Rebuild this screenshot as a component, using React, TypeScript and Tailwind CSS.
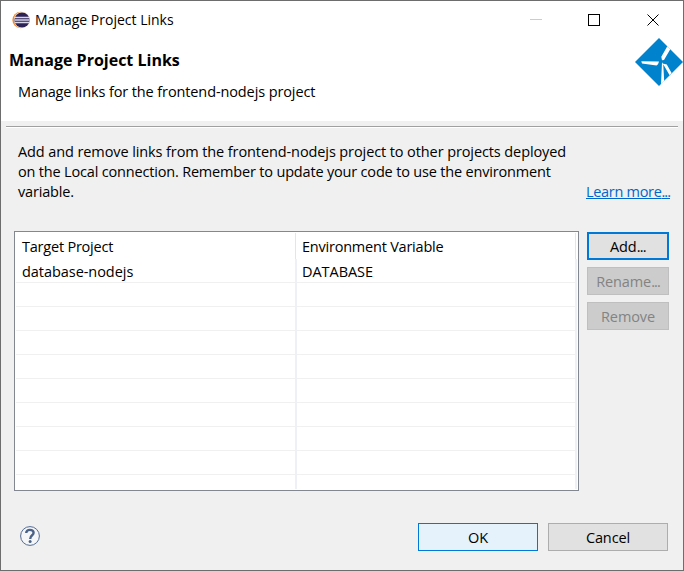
import React from "react";

const rows = [
  { target: "database-nodejs", variable: "DATABASE" },
  ...Array.from({ length: 8 }, () => ({ target: "", variable: "" })),
];

function EclipseIcon() {
  return (
    <svg width="18" height="18" viewBox="0 0 18 18" className="shrink-0">
      <circle cx="8.6" cy="9" r="8.2" fill="#f08a2c" />
      <circle cx="10" cy="9" r="8.2" fill="#fbe6d0" />
      <circle cx="10" cy="9" r="7.6" fill="#2c2255" />
      <path d="M3 6.6h14M2.6 9h15M3 11.4h14" stroke="#d9d5ea" strokeWidth="1.5" />
    </svg>
  );
}

function WindmillLogo() {
  return (
    <svg width="48" height="48" viewBox="0 0 48 48" className="shrink-0">
      <path d="M24 0L48 24L24 48L0 24Z" fill="#0082cc" />
      <path
        d="M32.3 8.3L35.3 11.3L29 22L27 22.3L26.3 18.8ZM6.3 23.2L24 23.6L23 26.2L21.5 27.4L7 25.6ZM27 24.3L28.2 26L29.2 43L26 46.2ZM27.8 25.6L31.8 26.6L36.6 35L34.6 37.2Z"
        fill="#fff"
      />
    </svg>
  );
}

function WindowControls() {
  return (
    <svg width="131" height="14" viewBox="0 0 131 14" fill="none" shapeRendering="crispEdges">
      <path d="M0 6.5h12" stroke="#ccc" />
      <path d="M58.5 1.5h11v11h-11z" stroke="#000" />
      <path d="M117.5 1.5l11 11M128.5 1.5l-11 11" stroke="#000" shapeRendering="auto" />
    </svg>
  );
}

function HelpIcon() {
  return (
    <svg width="20" height="20" viewBox="0 0 20 20" fill="none">
      <circle cx="10" cy="10" r="9.4" fill="#f5f6f8" stroke="#526b92" strokeWidth="1" />
      <path
        d="M6.2 7C6.2 4.8 7.7 3.9 9.9 3.9C12.3 3.9 13.6 5 13.6 6.8C13.6 9.4 10.2 9.2 10.2 12.9"
        stroke="#4b6288"
        strokeWidth="2.4"
      />
      <circle cx="10.1" cy="15.5" r="1.5" fill="#4b6288" />
    </svg>
  );
}

export default function App() {
  return (
    <div className="flex h-[571px] w-[684px] flex-col overflow-hidden border border-[#6d6d6d] bg-[#f0f0f0] font-['Open_Sans','Noto_Sans',sans-serif] text-[14.5px] leading-5 text-black">
      <header className="h-[120px] shrink-0 bg-white">
        <div className="flex h-[37px] items-center pr-[22px] pl-[11px]">
          <EclipseIcon />
          <span className="ml-[5px] flex-1 text-[14px] whitespace-nowrap">Manage Project Links</span>
          <WindowControls />
        </div>
        <div className="flex justify-between">
          <div>
            <h1 className="mt-3 pl-2 text-[16px] leading-5 font-bold">Manage Project Links</h1>
            <p className="mt-3 pl-[17px] tracking-[-0.11px]">Manage links for the frontend-nodejs project</p>
          </div>
          <WindmillLogo />
        </div>
      </header>
      <div className="mx-[5px] mt-[5px] h-[2px] shrink-0 border-t border-[#a0a0a0] bg-white" />

      <div className="mt-[14px] flex h-[60px] shrink-0 items-end justify-between pr-[13px] pl-[17px] whitespace-nowrap">
        <p className="tracking-[-0.18px]">
          <span className="tracking-[-0.1px]">
            Add and remove links from the frontend-nodejs project to other projects deployed
          </span>
          <br />
          on the Local connection. Remember to update your code to use the environment
          <br />
          variable.
        </p>
        <a className="tracking-[-0.3px] text-[#0066cc] underline">
          Learn more<span className="tracking-[-1px]">...</span>
        </a>
      </div>

      <main className="mt-[29px] flex h-[260px] shrink-0 gap-2 pl-[13px]">
        <section className="h-[260px] w-[565px] overflow-hidden border border-[#828790] bg-white px-px pt-px pb-px">
          <div className="flex h-[26px] w-[560px] tracking-[-0.22px]">
            <div className="w-[280px] border-r border-[#e5e5e5] pt-1 pl-1.5">Target Project</div>
            <div className="w-[280px] border-r border-[#e5e5e5] pt-1 pl-1.5">Environment Variable</div>
          </div>
          <div className="h-[230px] w-[561px] overflow-hidden">
            {rows.map((row, i) => (
              <div key={i} className="flex h-6 w-[561px] tracking-[-0.05px]">
                <div className="w-[281px] border-r-2 border-[#edf1f7]">
                  <div className="h-6 border-b border-[#f0f0f0] pt-[3px] pl-1.5">{row.target}</div>
                </div>
                <div className="w-[280px] border-r-2 border-[#edf1f7]">
                  <div className="h-6 border-b border-[#f0f0f0] pt-[3px] pl-[5px]">{row.variable}</div>
                </div>
              </div>
            ))}
            <div className="flex h-6">
              <div className="w-[281px] border-r-2 border-[#edf1f7]" />
              <div className="w-[280px] border-r-2 border-[#edf1f7]" />
            </div>
          </div>
        </section>
        <aside className="flex w-[82px] flex-col gap-[7px] pt-px tracking-[-0.1px]">
          <button className="h-7 border-2 border-[#0078d7] bg-[#e1e1e1] pt-0.5">
            Add<span className="tracking-[-0.7px]">...</span>
          </button>
          <button className="h-7 border border-[#bfbfbf] bg-[#ccc] pt-0.5 text-[#838383]" disabled>
            Rename<span className="tracking-[-0.9px]">...</span>
          </button>
          <button className="h-7 border border-[#bfbfbf] bg-[#ccc] pt-0.5 text-[#838383]" disabled>Remove</button>
        </aside>
      </main>

      <footer className="mt-8 flex h-7 shrink-0 items-center gap-2.5 pr-[15px] pl-[19px]">
        <div className="-mt-0.5"><HelpIcon /></div>
        <span className="flex-1" />
        <button className="h-7 w-[120px] border border-[#0078d7] bg-[#e5f1fb] pt-0.5">OK</button>
        <button className="h-7 w-[120px] border border-[#adadad] bg-[#e1e1e1] pt-0.5 tracking-[-0.1px]">Cancel</button>
      </footer>
    </div>
  );
}
